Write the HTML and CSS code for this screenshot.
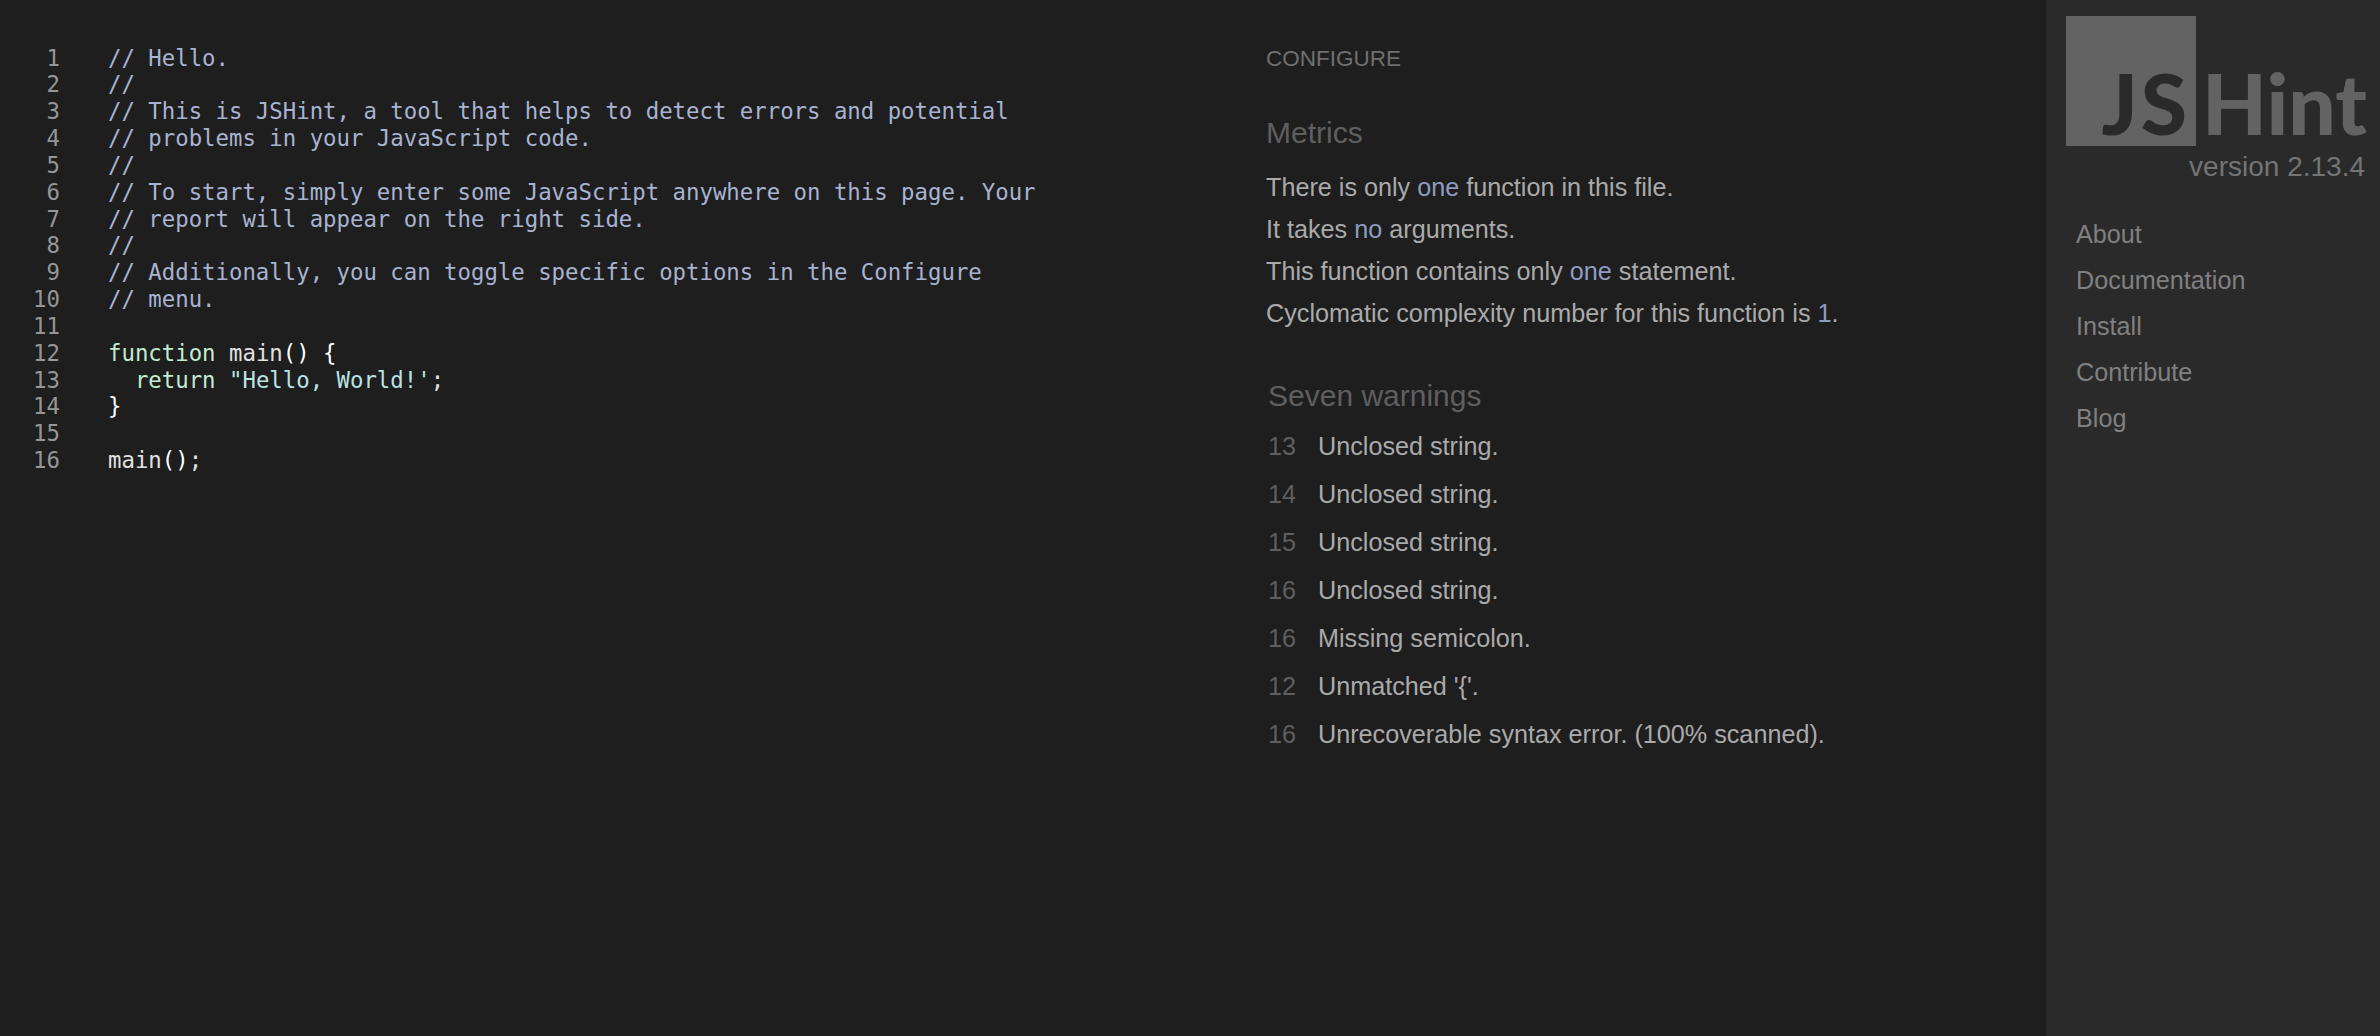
FILE: index.html
```html
<!DOCTYPE html>
<html lang="en">
<head>
<meta charset="utf-8">
<title>JSHint</title>
<link rel="stylesheet" href="styles.css">
</head>
<body>
<div class="page">
  <main class="editor">
    <div class="gutter">
      <div>1</div><div>2</div><div>3</div><div>4</div><div>5</div><div>6</div><div>7</div><div>8</div><div>9</div><div>10</div><div>11</div><div>12</div><div>13</div><div>14</div><div>15</div><div>16</div>
    </div>
    <pre class="code"><span class="c">// Hello.
//
// This is JSHint, a tool that helps to detect errors and potential
// problems in your JavaScript code.
//
// To start, simply enter some JavaScript anywhere on this page. Your
// report will appear on the right side.
//
// Additionally, you can toggle specific options in the Configure
// menu.</span>

<span class="k">function</span> <span class="n">main</span><span class="p">() {</span>
  <span class="k">return</span> <span class="s">"Hello, World!'</span><span class="n">;</span>
<span class="p">}</span>

<span class="n">main</span><span class="p">()</span><span class="n">;</span></pre>
  </main>
  <section class="report">
    <div class="configure">CONFIGURE</div>
    <h2 class="heading">Metrics</h2>
    <p class="metric">There is only <span class="hl">one</span> function in this file.</p>
    <p class="metric">It takes <span class="hl">no</span> arguments.</p>
    <p class="metric">This function contains only <span class="hl">one</span> statement.</p>
    <p class="metric">Cyclomatic complexity number for this function is <span class="hl">1</span>.</p>
    <h2 class="heading warnings-title">Seven warnings</h2>
    <div class="warnings">
      <div class="warning"><span class="ln">13</span><span>Unclosed string.</span></div>
      <div class="warning"><span class="ln">14</span><span>Unclosed string.</span></div>
      <div class="warning"><span class="ln">15</span><span>Unclosed string.</span></div>
      <div class="warning"><span class="ln">16</span><span>Unclosed string.</span></div>
      <div class="warning"><span class="ln">16</span><span>Missing semicolon.</span></div>
      <div class="warning"><span class="ln">12</span><span>Unmatched '{'.</span></div>
      <div class="warning"><span class="ln">16</span><span>Unrecoverable syntax error. (100% scanned).</span></div>
    </div>
  </section>
  <aside class="sidebar">
    <div class="logo">
      <div class="mark"><span class="js">JS</span></div>
      <span class="hint">Hint</span>
    </div>
    <div class="version">version 2.13.4</div>
    <nav class="nav">
      <a>About</a>
      <a>Documentation</a>
      <a>Install</a>
      <a>Contribute</a>
      <a>Blog</a>
    </nav>
  </aside>
</div>
</body>
</html>
```
FILE: styles.css
```css
* { box-sizing: border-box; }
html, body { margin: 0; height: 100%; }
body {
  background: #1e1e1e;
  font-family: "Liberation Sans", Arial, sans-serif;
  overflow: hidden;
}
.page { display: flex; height: 1036px; }

.editor {
  width: 1266px;
  flex: none;
  display: flex;
  padding-top: 44.5px;
  font-family: "DejaVu Sans Mono", monospace;
  font-size: 22.33px;
  line-height: 26.85px;
}
.gutter {
  width: 60px;
  flex: none;
  text-align: right;
  color: #969696;
}
.code {
  margin: 0 0 0 48px;
  font: inherit;
  color: #ddd;
}
.c { color: #a9b3d1; }
.k { color: #c3ecd2; }
.n { color: #e2e2e2; }
.p { color: #fff; }
.s { color: #b9e4e4; }

.report { flex: 1; padding-top: 45px; color: #aaa; }
.configure { font-size: 22.5px; line-height: 28px; color: #6f6f6f; }
.heading {
  margin: 42px 0 15px;
  font-size: 30px;
  line-height: 36px;
  font-weight: 400;
  color: #5f5f5f;
}
.metric { margin: 0; font-size: 25.2px; line-height: 42px; }
.hl { color: #8e9bc2; }
.warnings-title { margin: 44px 0 8px 2px; }
.warning { display: flex; height: 48px; align-items: center; font-size: 25.2px; padding-left: 2px; }
.ln { width: 50px; flex: none; color: #5e5e5e; }

.sidebar {
  width: 334px;
  flex: none;
  background: #2a2a2a;
  padding: 16px 15px 0 20px;
}
.logo { display: flex; align-items: flex-start; height: 130px; font-family: Lato, sans-serif; font-weight: 900; font-size: 84px; line-height: 1; }
.mark {
  width: 130px;
  height: 130px;
  flex: none;
  background: #636363;
  display: flex;
  align-items: flex-end;
  justify-content: flex-end;
  padding: 0 6px 7px 0;
  line-height: 72px;
}
.js { color: #2a2a2a; letter-spacing: 3px; }
.hint { color: #636363; margin: 51px 0 0 6px; line-height: 72px; }
.version { text-align: right; font-size: 28px; line-height: 34px; color: #747474; margin-top: 4px; }
.nav { display: flex; flex-direction: column; padding: 27px 0 0 10px; }
.nav a { font-size: 25.2px; line-height: 46px; color: #808080; }
```
